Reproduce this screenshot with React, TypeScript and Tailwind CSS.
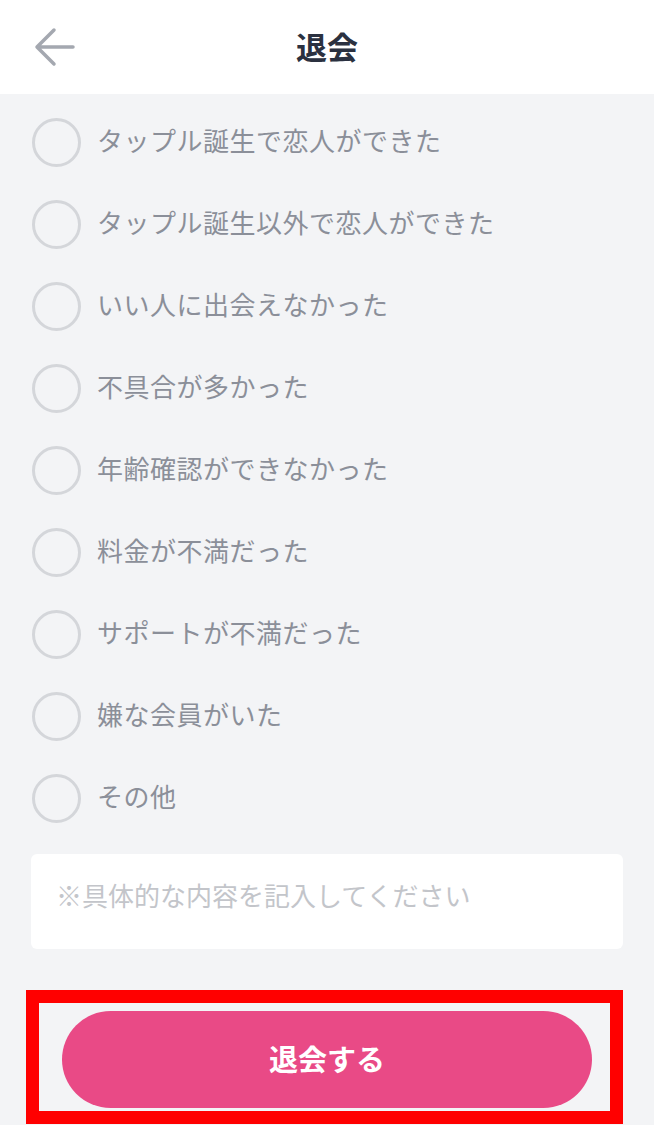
import React from "react";

const reasons = [
  "タップル誕生で恋人ができた",
  "タップル誕生以外で恋人ができた",
  "いい人に出会えなかった",
  "不具合が多かった",
  "年齢確認ができなかった",
  "料金が不満だった",
  "サポートが不満だった",
  "嫌な会員がいた",
  "その他",
];

export default function App() {
  return (
    <div
      className="w-[654px] h-[1125px] bg-[#f3f4f6] overflow-hidden"
      style={{ fontFamily: '"Noto Sans CJK JP", "Noto Sans", sans-serif' }}
    >
      <header className="h-[94px] bg-white flex items-center relative">
        <button className="absolute left-[33px] top-[26px] w-[44px] h-[42px] flex items-center justify-center">
          <svg width="44" height="42" viewBox="0 0 44 42" fill="none">
            <path d="M40 21H5M21 4L4 21L21 38" stroke="#a4a8b0" strokeWidth="3.5" strokeLinecap="round" strokeLinejoin="round" />
          </svg>
        </button>
        <h1 className="w-full text-center text-[31px] font-bold text-[#2b3140] leading-none pb-[4px]">退会</h1>
      </header>
      <div className="pt-[7px]">
        {reasons.map((r) => (
          <label key={r} className="h-[82px] flex items-center pl-[32px]">
            <span className="w-[49px] h-[49px] rounded-full border-[3px] border-[#d4d6da] bg-[#f3f4f6] shrink-0" />
            <span className="ml-[16px] mb-[4px] text-[26px] text-[#8b8f99] leading-none tracking-[0.5px]">{r}</span>
          </label>
        ))}
      </div>
      <div className="mt-[15px] mx-[31px] h-[95px] bg-white rounded-[6px] flex items-center px-[25px] pb-[13px]">
        <span className="text-[26px] text-[#c3c5ca] leading-none">※具体的な内容を記入してください</span>
      </div>
      <div className="mt-[41px] ml-[26px] w-[597px] h-[134px] border-[13px] border-[#ff0000] flex items-start pt-[8px] pl-[23px]">
        <button className="w-[530px] h-[97px] rounded-full bg-[#e94a86] text-white text-[29px] font-bold flex items-center justify-center pb-[2px]">
          退会する
        </button>
      </div>
    </div>
  );
}
